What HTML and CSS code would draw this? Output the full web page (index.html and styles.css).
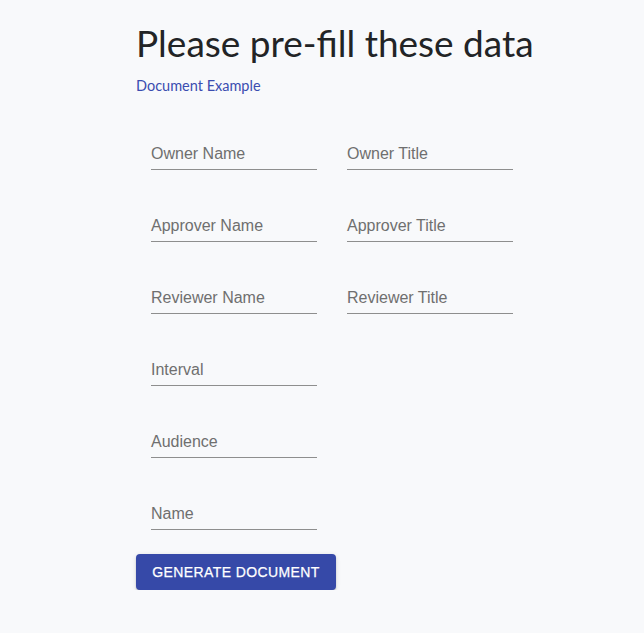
FILE: index.html
```html
<!DOCTYPE html>
<html>
<head>
<meta charset="utf-8">
<link rel="stylesheet" href="styles.css">
</head>
<body>
<main class="page">
  <h1 class="title">Please pre-fill these data</h1>
  <a class="example" href="#">Document Example</a>
  <form class="fields">
    <div class="field"><span class="label">Owner Name</span></div>
    <div class="field"><span class="label">Owner Title</span></div>
    <div class="field"><span class="label">Approver Name</span></div>
    <div class="field"><span class="label">Approver Title</span></div>
    <div class="field"><span class="label">Reviewer Name</span></div>
    <div class="field"><span class="label">Reviewer Title</span></div>
    <div class="field full"><span class="label">Interval</span></div>
    <div class="field full"><span class="label">Audience</span></div>
    <div class="field full"><span class="label">Name</span></div>
  </form>
  <button class="generate" type="button">Generate Document</button>
</main>
</body>
</html>
```

FILE: styles.css
```css
html, body {
  margin: 0;
  padding: 0;
  background: #f8f9fb;
}
.page {
  padding: 21px 0 0 136px;
  display: flex;
  flex-direction: column;
  align-items: flex-start;
}
.title {
  margin: 0;
  font-family: Lato, "Noto Sans", sans-serif;
  font-weight: 400;
  font-size: 37px;
  line-height: 44px;
  color: #222426;
}
.example {
  margin-top: 12px;
  font-family: Lato, "Noto Sans", sans-serif;
  font-size: 14.5px;
  line-height: 18px;
  color: #3b4db0;
  text-decoration: none;
}
.fields {
  margin-top: 15px;
  padding: 12px 15px;
  display: grid;
  grid-template-columns: 166px 166px;
  column-gap: 30px;
  row-gap: 24px;
}
.field {
  height: 48px;
  box-sizing: border-box;
  border-bottom: 1px solid #8e8e8e;
  display: flex;
  align-items: flex-end;
  padding-bottom: 6px;
}
.full {
  grid-column: 1;
}
.label {
  font-family: "Liberation Sans", Arial, sans-serif;
  font-size: 16px;
  line-height: 19px;
  color: #6f6f6f;
}
.generate {
  margin-top: 12px;
  width: 200px;
  height: 36px;
  border: none;
  border-radius: 4px;
  background: #3649a8;
  color: #fff;
  font-family: "Liberation Sans", Arial, sans-serif;
  font-size: 14px;
  font-weight: 500;
  letter-spacing: 0.4px;
  text-transform: uppercase;
  -webkit-text-stroke: 0.25px #fff;
  box-shadow: 0 3px 1px -2px rgba(0,0,0,0.2), 0 2px 2px 0 rgba(0,0,0,0.14), 0 1px 5px 0 rgba(0,0,0,0.12);
}
```
